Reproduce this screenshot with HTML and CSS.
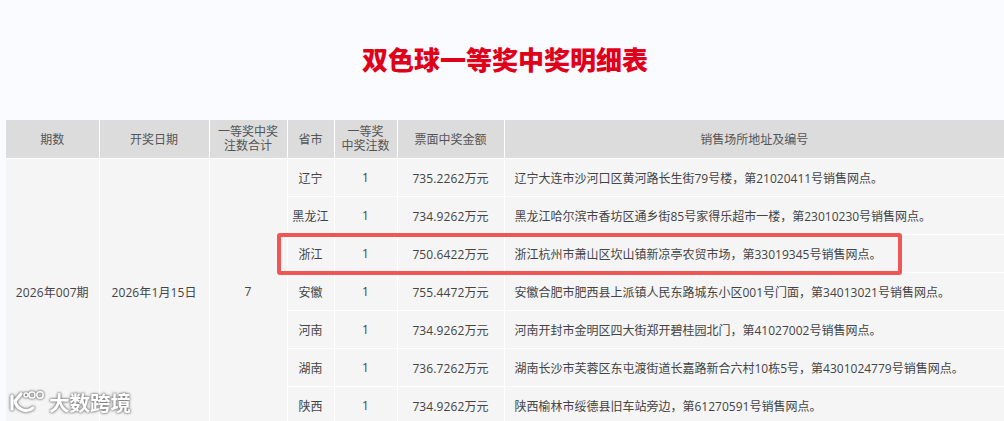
FILE: index.html
```html
<!DOCTYPE html>
<html lang="zh">
<head>
<meta charset="utf-8">
<title>双色球一等奖中奖明细表</title>
<link rel="stylesheet" href="styles.css">
</head>
<body>
<main class="page">
<h1 class="title">双色球一等奖中奖明细表</h1>
<table class="prizes">
<colgroup>
<col class="c1"><col class="c2"><col class="c3"><col class="c4"><col class="c5"><col class="c6"><col class="c7">
</colgroup>
<thead>
<tr><th>期数</th><th>开奖日期</th><th class="tight">一等奖中奖<br>注数合计</th><th>省市</th><th class="tight">一等奖<br>中奖注数</th><th>票面中奖金额</th><th>销售场所地址及编号</th></tr>
</thead>
<tbody>
<tr><td rowspan="7">2026年007期</td><td rowspan="7">2026年1月15日</td><td rowspan="7">7</td><td>辽宁</td><td>1</td><td>735.2262万元</td><td class="addr">辽宁大连市沙河口区黄河路长生街79号楼，第21020411号销售网点。</td></tr>
<tr><td>黑龙江</td><td>1</td><td>734.9262万元</td><td class="addr">黑龙江哈尔滨市香坊区通乡街85号家得乐超市一楼，第23010230号销售网点。</td></tr>
<tr><td>浙江</td><td>1</td><td>750.6422万元</td><td class="addr">浙江杭州市萧山区坎山镇新凉亭农贸市场，第33019345号销售网点。</td></tr>
<tr><td>安徽</td><td>1</td><td>755.4472万元</td><td class="addr">安徽合肥市肥西县上派镇人民东路城东小区001号门面，第34013021号销售网点。</td></tr>
<tr><td>河南</td><td>1</td><td>734.9262万元</td><td class="addr">河南开封市金明区四大街郑开碧桂园北门，第41027002号销售网点。</td></tr>
<tr><td>湖南</td><td>1</td><td>736.7262万元</td><td class="addr">湖南长沙市芙蓉区东屯渡街道长嘉路新合六村10栋5号，第4301024779号销售网点。</td></tr>
<tr><td>陕西</td><td>1</td><td>734.9262万元</td><td class="addr">陕西榆林市绥德县旧车站旁边，第61270591号销售网点。</td></tr>
</tbody>
</table>
</main>
<div class="highlight"></div>
<div class="mark">
<svg class="mark-logo" width="38" height="26" viewBox="0 0 38 26" fill="none" stroke="#fff" stroke-linecap="round">
<path d="M4 7V20" stroke-width="3.2"/>
<path d="M13 5L7 12C8 19 17 25 25 19" stroke-width="3.2"/>
<circle cx="18" cy="6" r="2" stroke-width="1.4"/>
<circle cx="24" cy="6" r="3" stroke-width="1.5"/>
<circle cx="32" cy="6" r="3.2" stroke-width="1.5"/>
</svg>
<span class="mark-text">大数跨境</span>
</div>
</body>
</html>
```
FILE: styles.css
```css
html, body {
  margin: 0;
  padding: 0;
  height: 421px;
  overflow: hidden;
  background: #f9fbff;
}
body {
  position: relative;
  font-family: "Open Sans", "Noto Sans CJK SC", sans-serif;
  color: #444;
}
.page {
  padding: 0 0 0 6px;
}
.title {
  margin: 0;
  padding: 40px 0 0;
  height: 120px;
  box-sizing: border-box;
  text-align: center;
  font-family: "Noto Sans CJK SC", sans-serif;
  font-size: 26px;
  line-height: 38px;
  font-weight: 900;
  color: #e0001a;
  width: 998px;
}
.prizes {
  width: 998px;
  table-layout: fixed;
  border-collapse: collapse;
  font-size: 12px;
}
.c1 { width: 93px; }
.c2 { width: 110px; }
.c3 { width: 78px; }
.c4 { width: 47px; }
.c5 { width: 63px; }
.c6 { width: 107px; }
.prizes th, .prizes td {
  border: 1px solid #fff;
  padding: 0;
  text-align: center;
  vertical-align: middle;
}
.prizes tr > :first-child { border-left: 0; }
.prizes tr > :last-child { border-right: 0; }
.prizes thead tr > * { border-top: 0; }
.prizes th {
  height: 38px;
  background: #dcdcdc;
  font-weight: 400;
  line-height: 17px;
  color: #555;
}
.prizes .tight {
  line-height: 14px;
}
.prizes td {
  height: 37px;
  background: #f5f5f5;
  letter-spacing: 0.1px;
}
.prizes .addr {
  text-align: left;
  padding-left: 10px;
  white-space: nowrap;
  letter-spacing: 0;
}
.highlight {
  position: absolute;
  left: 277px;
  top: 233px;
  width: 625px;
  height: 42px;
  box-sizing: border-box;
  border: 4px solid #ef5757;
  border-radius: 3px;
}
.mark {
  position: absolute;
  left: 8px;
  top: 389px;
  display: flex;
  align-items: center;
  gap: 3px;
  color: #fff;
  filter: drop-shadow(0 0 1px #777) drop-shadow(0 0 1px #999);
}
.mark-text {
  font-family: "Noto Sans CJK SC", sans-serif;
  font-size: 20.5px;
  line-height: 26px;
  font-weight: 700;
}
```
